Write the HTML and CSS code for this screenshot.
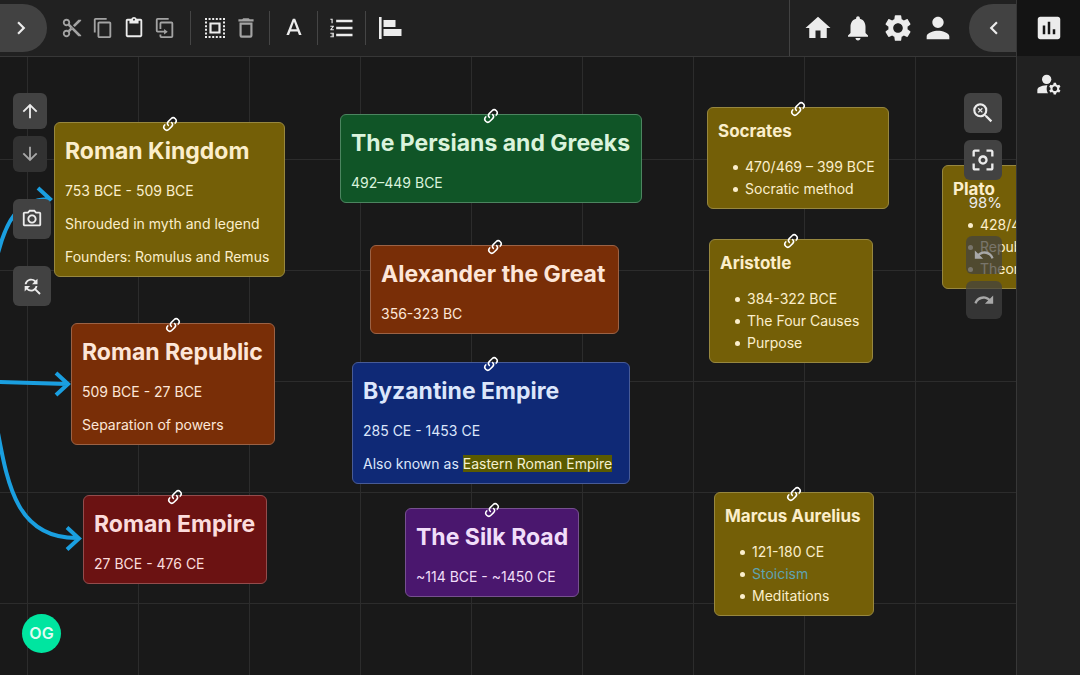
FILE: index.html
```html
<!DOCTYPE html>
<html lang="en">
<head>
<meta charset="utf-8">
<title>Ancient History Map</title>
<link rel="stylesheet" href="styles.css">
</head>
<body>
<svg class="sprite" aria-hidden="true">
  <symbol id="link" viewBox="0 0 24 24"><path d="M10.59 13.41c.41.39.41 1.03 0 1.42-.39.39-1.03.39-1.42 0a5.003 5.003 0 0 1 0-7.07l3.54-3.54a5.003 5.003 0 0 1 7.07 0 5.003 5.003 0 0 1 0 7.07l-1.49 1.49c.01-.82-.12-1.64-.4-2.42l.47-.48a2.982 2.982 0 0 0 0-4.24 2.982 2.982 0 0 0-4.24 0l-3.53 3.53a2.982 2.982 0 0 0 0 4.24m2.82-4.24c.39-.39 1.03-.39 1.42 0a5.003 5.003 0 0 1 0 7.07l-3.54 3.54a5.003 5.003 0 0 1-7.07 0 5.003 5.003 0 0 1 0-7.07l1.49-1.49c-.01.82.12 1.64.4 2.43l-.47.47a2.982 2.982 0 0 0 0 4.24 2.982 2.982 0 0 0 4.24 0l3.53-3.53a2.982 2.982 0 0 0 0-4.24.973.973 0 0 1 0-1.42z"/></symbol>
</svg>
<div class="app">
  <div class="workspace">
    <header class="topbar">
      <button class="pill pill-left" aria-label="Open menu"><svg class="i26" viewBox="0 0 24 24"><path d="M10 6 8.59 7.41 13.17 12l-4.58 4.59L10 18l6-6z"/></svg></button>
      <div class="tools">
        <div class="tool-group">
          <button class="tool dim" aria-label="Cut"><svg class="i22" viewBox="0 0 24 24"><path d="M9.64 7.64c.23-.5.36-1.05.36-1.64 0-2.21-1.79-4-4-4S2 3.79 2 6s1.79 4 4 4c.59 0 1.14-.13 1.64-.36L10 12l-2.36 2.36C7.14 14.13 6.59 14 6 14c-2.21 0-4 1.79-4 4s1.79 4 4 4 4-1.79 4-4c0-.59-.13-1.14-.36-1.64L12 14l7 7h3v-1L9.64 7.64zM6 8c-1.1 0-2-.89-2-2s.9-2 2-2 2 .89 2 2-.9 2-2 2zm0 12c-1.1 0-2-.89-2-2s.9-2 2-2 2 .89 2 2-.9 2-2 2zm6-7.5c-.28 0-.5-.22-.5-.5s.22-.5.5-.5.5.22.5.5-.22.5-.5.5zM19 3l-6 6 2 2 7-7V3z"/></svg></button>
          <button class="tool dim" aria-label="Copy"><svg class="i22" viewBox="0 0 24 24"><path d="M16 1H4c-1.1 0-2 .9-2 2v14h2V3h12V1zm3 4H8c-1.1 0-2 .9-2 2v14c0 1.1.9 2 2 2h11c1.1 0 2-.9 2-2V7c0-1.1-.9-2-2-2zm0 16H8V7h11v14z"/></svg></button>
          <button class="tool" aria-label="Paste"><svg class="i22" viewBox="0 0 24 24"><path d="M19 2h-4.18C14.4.84 13.3 0 12 0c-1.3 0-2.4.84-2.82 2H5c-1.1 0-2 .9-2 2v16c0 1.1.9 2 2 2h14c1.1 0 2-.9 2-2V4c0-1.1-.9-2-2-2zm-7 0c.55 0 1 .45 1 1s-.45 1-1 1-1-.45-1-1 .45-1 1-1zm7 18H5V4h2v3h10V4h2v16z"/></svg></button>
          <button class="tool dim" aria-label="Duplicate"><svg class="i22" viewBox="0 0 24 24"><path d="M11 17H4a2 2 0 0 1-2-2V3a2 2 0 0 1 2-2h12v2H4v12h7v-2l4 3-4 3v-2m8 4V7H8v6H6V7a2 2 0 0 1 2-2h11a2 2 0 0 1 2 2v14a2 2 0 0 1-2 2H8a2 2 0 0 1-2-2v-2h2v2h11z"/></svg></button>
        </div>
        <span class="sep"></span>
        <button class="tool" aria-label="Select all"><svg class="i22" viewBox="0 0 22 22"><path d="M1 2h20M1 20h20" fill="none" stroke="currentColor" stroke-width="2" stroke-dasharray="2 1.6"/><path d="M2 4.6v16M20 4.6v16" fill="none" stroke="currentColor" stroke-width="2" stroke-dasharray="2 1.6"/><path d="M6.5 6.5h9v9h-9z" fill="none" stroke="currentColor" stroke-width="2.2"/></svg></button>
        <button class="tool dim" aria-label="Delete"><svg class="i26" viewBox="0 0 24 24"><path d="M6 19a2 2 0 0 0 2 2h8a2 2 0 0 0 2-2V7H6v12M8 9h8v10H8V9m7.500-5l-1-1h-5l-1 1H5v2h14V4h-3.500z"/></svg></button>
        <span class="sep"></span>
        <button class="tool" aria-label="Text style"><svg class="i28" viewBox="0 -1 24 24"><path d="M11 3 5.500 17h2.250l1.120-3h6.250l1.120 3h2.250L13 3h-2zm-1.380 9L12 5.670 14.380 12H9.620z"/></svg></button>
        <span class="sep"></span>
        <button class="tool" aria-label="Numbered list"><svg class="i28" viewBox="0 0 24 24"><path d="M2 17h2v.5H3v1h1v.5H2v1h3v-4H2v1zm1-9h1V4H2v1h1v3zm-1 3h1.800L2 13.100v.9h3v-1H3.200L5 10.900V10H2v1zm5-6v2h14V5H7zm0 14h14v-2H7v2zm0-6h14v-2H7v2z"/></svg></button>
        <span class="sep"></span>
        <button class="tool" aria-label="Align left"><svg class="i26" viewBox="0 0 26 26"><path d="M2 2h2.600v22H2zM6.500 5h12v7h-12zM6.500 14h18v7h-18z"/></svg></button>
      </div>
      <nav class="account">
        <button class="nav" aria-label="Home"><svg class="i30" viewBox="0 0 24 24"><path d="M10 20v-6h4v6h5v-8h3L12 3 2 12h3v8z"/></svg></button>
        <button class="nav" aria-label="Notifications"><svg class="i30" viewBox="0 0 24 24"><path d="M12 22c1.100 0 2-.9 2-2h-4c0 1.100.89 2 2 2zm6-6v-5c0-3.070-1.640-5.640-4.500-6.320V4c0-.83-.67-1.500-1.500-1.500s-1.500.67-1.500 1.500v.68C7.630 5.360 6 7.920 6 11v5l-2 2v1h16v-1l-2-2z"/></svg></button>
        <button class="nav" aria-label="Settings"><svg class="i32" viewBox="0 0 24 24"><path d="M19.140 12.940c.04-.3.06-.61.06-.94 0-.32-.02-.64-.07-.94l2.030-1.580c.18-.14.23-.41.12-.61l-1.920-3.320c-.12-.22-.37-.29-.59-.22l-2.390.96c-.5-.38-1.030-.7-1.620-.94l-.36-2.540c-.04-.24-.24-.41-.48-.41h-3.840c-.24 0-.43.17-.47.41l-.36 2.540c-.59.24-1.130.57-1.620.94l-2.390-.96c-.22-.08-.47 0-.59.22L2.740 8.870c-.12.21-.08.47.12.61l2.030 1.580c-.05.3-.09.63-.09.94s.02.64.07.94l-2.030 1.580c-.18.14-.23.41-.12.61l1.920 3.320c.12.22.37.29.59.22l2.390-.96c.5.38 1.030.7 1.620.94l.36 2.540c.05.24.24.41.48.41h3.840c.24 0 .44-.17.47-.41l.36-2.540c.59-.24 1.130-.56 1.620-.94l2.390.96c.22.08.47 0 .59-.22l1.920-3.320c.12-.22.07-.47-.12-.61l-2.010-1.580zM12 15.600c-1.980 0-3.600-1.620-3.600-3.600s1.620-3.600 3.600-3.600 3.600 1.620 3.600 3.600-1.620 3.600-3.600 3.600z"/></svg></button>
        <button class="nav" aria-label="Account"><svg class="i34" viewBox="0 0 24 24"><path d="M12 12c2.210 0 4-1.790 4-4s-1.790-4-4-4-4 1.790-4 4 1.790 4 4 4zm0 2c-2.670 0-8 1.340-8 4v2h16v-2c0-2.660-5.330-4-8-4z"/></svg></button>
      </nav>
      <button class="pill pill-right" aria-label="Collapse panel"><svg class="i26" viewBox="0 0 24 24"><path d="M15.410 7.410 14 6l-6 6 6 6 1.410-1.410L10.830 12z"/></svg></button>
    </header>

    <main class="canvas">
      <svg class="edges" aria-hidden="true">
        <path d="M-2 196C6 166 16 143 49 142M38 131l12 11-12 11"/>
        <path d="M-2 325L67 327M56 316l12 11-12 11"/>
        <path d="M-2 376C8 430 18 482 78 481M67 470.500l12 11-12 11"/>
      </svg>

      <article class="node yellow kingdom"><svg class="chain"><use href="#link"/></svg><h2>Roman Kingdom</h2><p>753 BCE - 509 BCE</p><p>Shrouded in myth and legend</p><p>Founders: Romulus and Remus</p></article>
      <article class="node orange republic"><svg class="chain"><use href="#link"/></svg><h2>Roman Republic</h2><p>509 BCE - 27 BCE</p><p>Separation of powers</p></article>
      <article class="node red empire"><svg class="chain"><use href="#link"/></svg><h2>Roman Empire</h2><p>27 BCE - 476 CE</p></article>
      <article class="node green persians"><svg class="chain"><use href="#link"/></svg><h2>The Persians and Greeks</h2><p>492–449 BCE</p></article>
      <article class="node orange alexander"><svg class="chain"><use href="#link"/></svg><h2>Alexander the Great</h2><p>356-323 BC</p></article>
      <article class="node blue byzantine"><svg class="chain"><use href="#link"/></svg><h2>Byzantine Empire</h2><p>285 CE - 1453 CE</p><p>Also known as <mark>Eastern Roman Empire</mark></p></article>
      <article class="node purple silk"><svg class="chain"><use href="#link"/></svg><h2>The Silk Road</h2><p>~114 BCE - ~1450 CE</p></article>
      <article class="node yellow socrates"><svg class="chain"><use href="#link"/></svg><h3>Socrates</h3><ul><li>470/469 – 399 BCE</li><li>Socratic method</li></ul></article>
      <article class="node yellow aristotle"><svg class="chain"><use href="#link"/></svg><h3>Aristotle</h3><ul><li>384-322 BCE</li><li>The Four Causes</li><li>Purpose</li></ul></article>
      <article class="node yellow marcus"><svg class="chain"><use href="#link"/></svg><h3>Marcus Aurelius</h3><ul><li>121-180 CE</li><li><a href="#stoicism">Stoicism</a></li><li>Meditations</li></ul></article>
      <article class="node yellow plato"><h3>Plato</h3><ul><li>428/427 – 348 BCE</li><li>Republic</li><li>Theory of Forms</li></ul></article>

      <div class="controls controls-left">
        <div class="stack">
          <button class="ctl small" aria-label="Move up"><svg class="i22" viewBox="0 0 24 24"><path d="m4 12 1.410 1.410L11 7.830V20h2V7.830l5.580 5.590L20 12l-8-8-8 8z"/></svg></button>
          <button class="ctl small faded" aria-label="Move down"><svg class="i22" viewBox="0 0 24 24"><path d="m20 12-1.410-1.410L13 16.170V4h-2v12.170l-5.580-5.590L4 12l8 8 8-8z"/></svg></button>
        </div>
        <button class="ctl" aria-label="Take snapshot"><svg class="i22" viewBox="0 0 24 24"><path d="M20 4h-3.170L15 2H9L7.170 4H4c-1.100 0-2 .9-2 2v12c0 1.100.9 2 2 2h16c1.100 0 2-.9 2-2V6c0-1.100-.9-2-2-2zm0 14H4V6h4.050l1.830-2h4.240l1.830 2H20v12zM12 7c-2.760 0-5 2.240-5 5s2.240 5 5 5 5-2.240 5-5-2.240-5-5-5zm0 8c-1.650 0-3-1.350-3-3s1.350-3 3-3 3 1.350 3 3-1.350 3-3 3z"/></svg></button>
        <button class="ctl" aria-label="Find and replace"><svg class="i22" viewBox="0 0 24 24"><path d="M11 6c1.380 0 2.630.56 3.540 1.460L12 10h6V4l-2.050 2.050C14.680 4.780 12.930 4 11 4c-3.530 0-6.430 2.610-6.920 6H6.100c.46-2.280 2.480-4 4.900-4zm5.640 9.140c.66-.9 1.120-1.970 1.280-3.140H15.900c-.46 2.280-2.480 4-4.900 4-1.380 0-2.630-.56-3.540-1.460L10 12H4v6l2.050-2.050C7.320 17.220 9.070 18 11 18c1.550 0 2.980-.51 4.140-1.360L20 21.490 21.490 20l-4.850-4.860z"/></svg></button>
      </div>

      <div class="controls controls-right">
        <button class="ctl" aria-label="Reset zoom"><svg class="i26" viewBox="0 0 24 24"><path d="M15.500 14h-.79l-.28-.27A6.471 6.471 0 0 0 16 9.500 6.500 6.500 0 1 0 9.500 16c1.610 0 3.090-.59 4.230-1.570l.27.28v.79l5 4.990L20.490 19l-4.990-5zm-6 0C7.010 14 5 11.990 5 9.500S7.010 5 9.500 5 14 7.010 14 9.500 11.990 14 9.500 14z"/><path d="m7.600 7.600 3.800 3.800m0-3.800-3.800 3.800" stroke="currentColor" stroke-width="1.200"/></svg></button>
        <button class="ctl" aria-label="Fit to screen"><svg class="i28" viewBox="0 0 24 24"><path d="M5 15H3v4c0 1.100.9 2 2 2h4v-2H5v-4zM5 5h4V3H5c-1.100 0-2 .9-2 2v4h2V5zm14-2h-4v2h4v4h2V5c0-1.100-.9-2-2-2zm0 16h-4v2h4c1.100 0 2-.9 2-2v-4h-2v4zM12 8c-2.210 0-4 1.790-4 4s1.790 4 4 4 4-1.790 4-4-1.790-4-4-4zm0 6c-1.100 0-2-.9-2-2s.9-2 2-2 2 .9 2 2-.9 2-2 2z"/></svg></button>
        <output class="zoom">98%</output>
        <button class="ctl history" aria-label="Undo"><svg class="i22" viewBox="0 0 24 24"><path d="M12.500 8c-2.650 0-5.050.99-6.900 2.600L2 7v9h9l-3.620-3.620c1.390-1.160 3.160-1.880 5.120-1.880 3.540 0 6.550 2.310 7.600 5.500l2.370-.78C21.080 11.030 17.150 8 12.500 8z"/></svg></button>
        <button class="ctl history" aria-label="Redo"><svg class="i22" viewBox="0 0 24 24"><path d="M18.400 10.600C16.550 8.990 14.150 8 11.500 8c-4.650 0-8.580 3.030-9.960 7.220L3.900 16c1.050-3.190 4.050-5.500 7.600-5.500 1.950 0 3.730.72 5.120 1.880L13 16h9V7l-3.600 3.600z"/></svg></button>
      </div>

      <div class="avatar">OG</div>
    </main>
  </div>

  <aside class="panel">
    <button class="panel-tab active" aria-label="Statistics"><svg class="i30" viewBox="0 0 24 24"><path d="M19 3H5c-1.100 0-2 .9-2 2v14c0 1.100.9 2 2 2h14c1.100 0 2-.9 2-2V5c0-1.100-.9-2-2-2zM9 17H7v-7h2v7zm4 0h-2V7h2v10zm4 0h-2v-4h2v4z"/></svg></button>
    <button class="panel-tab" aria-label="Manage accounts"><svg class="i28" viewBox="0 0 24 24"><circle cx="10" cy="8" r="4"/><path d="M10.670 13.020C10.450 13.010 10.230 13 10 13c-2.420 0-4.680.67-6.610 1.820C2.510 15.340 2 16.320 2 17.350V20h9.260C10.470 18.870 10 17.490 10 16c0-1.070.25-2.070.67-2.980zM20.750 16c0-.22-.03-.42-.06-.63l1.140-1.010-1-1.730-1.450.49c-.32-.27-.68-.48-1.080-.63L18 11h-2l-.3 1.490c-.4.15-.76.36-1.080.63l-1.450-.49-1 1.730 1.140 1.010c-.03.21-.06.41-.06.63s.03.42.06.63l-1.140 1.010 1 1.730 1.450-.49c.32.27.68.48 1.080.63L16 21h2l.3-1.490c.4-.15.76-.36 1.080-.63l1.450.49 1-1.730-1.140-1.010c.03-.21.06-.41.06-.63zM17 18c-1.100 0-2-.9-2-2s.9-2 2-2 2 .9 2 2-.9 2-2 2z"/></svg></button>
  </aside>
</div>
</body>
</html>
```
FILE: styles.css
```css
* { box-sizing: border-box; }

body {
  margin: 0;
  background: #191919;
  color: #ececec;
  font-family: Inter, "Liberation Sans", sans-serif;
  font-size: 14px;
  line-height: 22px;
}

button {
  display: flex;
  align-items: center;
  justify-content: center;
  padding: 0;
  border: 0;
  background: none;
  color: inherit;
  font: inherit;
  cursor: pointer;
}

svg { display: block; flex: none; fill: currentColor; }

.sprite { position: absolute; width: 0; height: 0; }

.i22 { width: 22px; height: 22px; }
.i26 { width: 26px; height: 26px; }
.i28 { width: 28px; height: 28px; }
.i30 { width: 30px; height: 30px; }
.i32 { width: 32px; height: 32px; }
.i34 { width: 34px; height: 34px; }

.app { display: flex; height: 100vh; }

.workspace {
  display: flex;
  flex: 1;
  flex-direction: column;
  min-width: 0;
}

/* Top bar */
.topbar {
  display: flex;
  align-items: center;
  flex: none;
  height: 57px;
  border-bottom: 1px solid #373737;
  background: #212121;
}

.pill { flex: none; width: 47px; height: 48px; background: #424242; }
.pill-left { padding-right: 5px; border-radius: 0 24px 24px 0; }
.pill-right { padding-left: 3px; border-radius: 24px 0 0 24px; }

.tools {
  display: flex;
  align-items: center;
  flex: 1;
  padding-left: 7px;
}

.tool-group { display: flex; padding: 0 2px; }
.tool { width: 31px; height: 34px; }
.dim { color: #a3a3a3; }
.sep { width: 1px; height: 34px; margin: 0 8px; background: #454545; }

.account {
  display: flex;
  align-items: center;
  align-self: stretch;
  padding: 0 11px 0 8px;
  border-left: 1px solid #424242;
}

.nav { width: 40px; height: 40px; }

/* Canvas */
.canvas {
  position: relative;
  flex: 1;
  overflow: hidden;
  background-color: #191919;
  background-image:
    linear-gradient(to right, #2c2c2c 1px, transparent 1px),
    linear-gradient(to bottom, #2c2c2c 1px, transparent 1px);
  background-position: 27px 0, 0 102px;
  background-size: 111px 111px;
}

.edges {
  position: absolute;
  inset: 0;
  width: 100%;
  height: 100%;
  fill: none;
  stroke: #1a9fe0;
  stroke-width: 4;
}

.node {
  position: absolute;
  padding: 10px 10px 8px;
  border: 1px solid;
  border-radius: 6px;
  white-space: nowrap;
}

.node h2, .node h3, .node p, .node ul { margin: 0; }
.node h2 { font-size: 23px; font-weight: 700; line-height: 36px; }
.node h3 { font-size: 17px; font-weight: 700; line-height: 27px; }
.node p, .node ul { margin-top: 11px; }
.node ul { padding-left: 15px; list-style: none; }
.node li { display: flex; align-items: center; gap: 7px; }

.node li::before {
  content: "";
  width: 5px;
  height: 5px;
  border-radius: 50%;
  background: currentColor;
}

.node a { color: #5fa3b0; text-decoration: none; }
.node mark { background: #5a5a00; color: #f4f0d0; }

.chain {
  position: absolute;
  top: -8px;
  left: calc(50% - 9px);
  width: 18px;
  height: 18px;
  color: #fff;
}

.yellow { background: #745f07; border-color: #97873f; color: #fbeecb; }
.orange { background: #792e07; border-color: #9b6245; color: #fde6d8; }
.red { background: #6b1212; border-color: #934c4c; color: #fbdcdc; }
.green { background: #105527; border-color: #4c8560; color: #daf3dc; }
.blue { background: #0f2976; border-color: #485b96; color: #dce6fb; }
.purple { background: #4a176e; border-color: #76508f; color: #f1def9; }

.kingdom { left: 54px; top: 65px; width: 231px; }
.republic { left: 71px; top: 266px; width: 204px; }
.empire { left: 83px; top: 438px; width: 184px; }
.persians { left: 340px; top: 57px; width: 302px; }
.alexander { left: 370px; top: 188px; width: 249px; }
.byzantine { left: 352px; top: 305px; width: 278px; }
.silk { left: 405px; top: 451px; width: 174px; }
.socrates { left: 707px; top: 50px; width: 182px; }
.aristotle { left: 709px; top: 182px; width: 164px; }
.marcus { left: 714px; top: 435px; width: 160px; }
.plato { left: 942px; top: 108px; width: 182px; }

/* Floating controls */
.controls {
  position: absolute;
  top: 36px;
  display: flex;
  flex-direction: column;
}

.controls-left { left: 13px; gap: 27px; }
.controls-right { right: 14px; gap: 7px; align-items: flex-end; }
.stack { display: flex; flex-direction: column; gap: 7px; }

.ctl {
  width: 38px;
  height: 40px;
  border-radius: 6px;
  background: #424242;
}

.ctl.small { width: 34px; height: 36px; }
.ctl.faded { background: #323232; color: #a8a8a8; }
.ctl.history { width: 36px; height: 38px; background: rgba(66, 66, 66, 0.7); color: #a8a8a8; }

.zoom {
  padding: 5px 0 15px;
  font-size: 15px;
}

.avatar {
  position: absolute;
  left: 22px;
  bottom: 22px;
  width: 39px;
  height: 39px;
  border-radius: 50%;
  background: #00e5a0;
  color: #dffcf2;
  font-size: 16px;
  font-weight: 600;
  line-height: 39px;
  text-align: center;
}

/* Side panel */
.panel {
  flex: none;
  width: 64px;
  border-left: 1px solid #373737;
  background: #212121;
}

.panel-tab { width: 100%; height: 56px; }
.panel-tab.active { background: #141414; }
```
